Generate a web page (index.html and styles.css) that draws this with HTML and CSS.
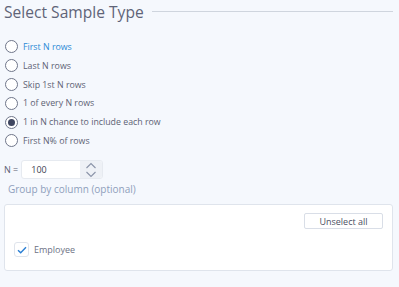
FILE: index.html
```html
<!DOCTYPE html>
<html lang="en">
<head>
  <title>Select Sample Type</title>
  <meta charset="UTF-8">
  <link rel="stylesheet" href="styles.css">
</head>
<body>
  <div class="panel">
    <div class="title-row">
      <h1>Select Sample Type</h1>
      <span class="rule"></span>
    </div>

    <ul class="options">
      <li class="opt link"><span class="radio"></span>First N rows</li>
      <li class="opt"><span class="radio"></span>Last N rows</li>
      <li class="opt"><span class="radio"></span>Skip 1st N rows</li>
      <li class="opt"><span class="radio"></span>1 of every N rows</li>
      <li class="opt"><span class="radio on"></span>1 in N chance to include each row</li>
      <li class="opt"><span class="radio"></span>First N% of rows</li>
    </ul>

    <div class="n-row">
      <span class="n-label">N =</span>
      <div class="spin">
        <span class="spin-value">100</span>
        <div class="spin-btns">
          <svg width="12" height="7" viewBox="0 0 12 7"><path d="M1.5 6 L6 1.5 L10.5 6" fill="none" stroke="#8a93a8" stroke-width="1.1"/></svg>
          <svg width="12" height="7" viewBox="0 0 12 7"><path d="M1.5 1 L6 5.5 L10.5 1" fill="none" stroke="#8a93a8" stroke-width="1.1"/></svg>
        </div>
      </div>
    </div>

    <div class="group-label">Group by column (optional)</div>
    <div class="group-box">
      <div class="group-actions">
        <button class="btn">Unselect all</button>
      </div>
      <label class="check-row">
        <span class="check">
          <svg width="10" height="8" viewBox="0 0 10 8"><path d="M1 4.2 L3.7 6.8 L9 1.2" fill="none" stroke="#2a7fd4" stroke-width="1.4"/></svg>
        </span>
        Employee
      </label>
    </div>
  </div>
</body>
</html>
```

FILE: styles.css
```css
:root {
  --bg: #f5f8fd;
  --text: #5d6274;
  --title: #5f6478;
  --link: #2b8ad6;
  --border: #dfe4ec;
  --muted: #8f9fbc;
}

body {
  margin: 0;
  background: var(--bg);
  font-family: "Open Sans", sans-serif;
  color: var(--text);
}

.panel {
  padding: 0 6px 0 4px;
}

.title-row {
  display: flex;
  align-items: center;
  gap: 8px;
}

h1 {
  margin: 0;
  font-size: 15.6px;
  font-weight: 400;
  color: var(--title);
  line-height: 24px;
}

.rule {
  flex: 1;
  height: 1px;
  background: #cfd5de;
  margin-top: -1px;
}

.options {
  list-style: none;
  margin: 13.6px 0 0;
  padding: 0;
}

.opt {
  display: flex;
  align-items: center;
  gap: 5px;
  height: 18.8px;
  font-size: 8.8px;
  padding-left: 1px;
}

.opt.link {
  color: var(--link);
}

.radio {
  width: 11px;
  height: 11px;
  border: 1px solid #6f768a;
  border-radius: 50%;
  background: #fff;
  box-sizing: content-box;
  display: flex;
  align-items: center;
  justify-content: center;
}

.radio.on::after {
  content: "";
  width: 7px;
  height: 7px;
  border-radius: 50%;
  background: #3f4660;
}

.n-row {
  display: flex;
  align-items: center;
  gap: 3px;
  margin-top: 10px;
}

.n-label {
  font-size: 9px;
}

.spin {
  display: flex;
  height: 19px;
  border: 1px solid #e6eaf0;
  border-radius: 3px;
  background: #fff;
  box-sizing: border-box;
  overflow: hidden;
}

.spin-value {
  width: 58px;
  padding-left: 9px;
  box-sizing: border-box;
  font-size: 9px;
  line-height: 17px;
  color: #3c4152;
}

.spin-btns {
  width: 22px;
  background: #eef1f6;
  display: flex;
  flex-direction: column;
  align-items: center;
  justify-content: center;
  gap: 2px;
}

.group-label {
  margin: 2px 0 0 4px;
  font-size: 10px;
  color: var(--muted);
  line-height: 16px;
}

.group-box {
  margin-top: 7px;
  height: 67px;
  background: #fff;
  border: 1px solid var(--border);
  border-radius: 3px;
  box-sizing: border-box;
  padding: 8px 9px 0 9px;
}

.group-actions {
  display: flex;
  justify-content: flex-end;
}

.btn {
  width: 79px;
  height: 16px;
  padding: 0;
  border: 1px solid #d9dee7;
  border-radius: 2px;
  background: #fff;
  font-family: "Open Sans", sans-serif;
  font-size: 9px;
  color: #4b5062;
}

.check-row {
  display: flex;
  align-items: center;
  gap: 5px;
  margin-top: 13px;
  font-size: 9px;
  color: #6d7285;
}

.check {
  width: 13px;
  height: 13px;
  border: 1px solid #dfe4ec;
  border-radius: 3px;
  background: #fff;
  display: flex;
  align-items: center;
  justify-content: center;
}
```
